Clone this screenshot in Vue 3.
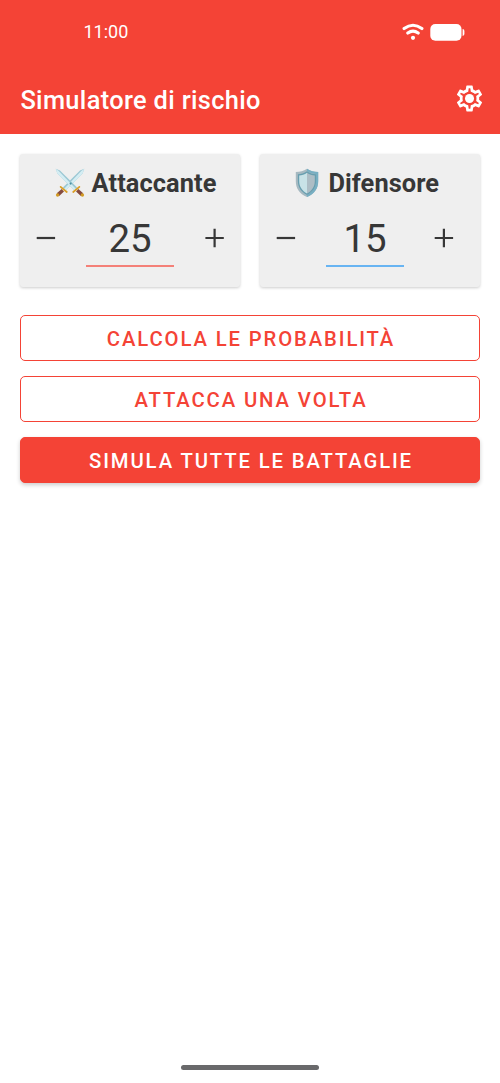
<script setup>
import { ref } from 'vue'

const attacker = ref(25)
const defender = ref(15)
</script>

<template>
  <main class="screen">
    <header>
      <div class="status">
        <time>11:00</time>
        <svg class="wifi" width="22" height="18" viewBox="0 0 22 18">
          <path d="M2.1 5.6Q11 -1.1 19.9 5.6M5.8 10Q11 6.1 16.2 10" fill="none" stroke="#fff" stroke-width="3.1" stroke-linecap="round" />
          <circle cx="11" cy="14.8" r="2.1" fill="#fff" />
        </svg>
        <svg class="battery" width="35" height="18" viewBox="0 0 35 18">
          <rect x="0.3" y="1" width="31.2" height="16.8" rx="5" fill="#fff" />
          <path d="M32.6 6.1Q34.4 6.3 34.4 7.9V11.1Q34.4 12.7 32.6 12.9Z" fill="#fff" />
        </svg>
      </div>
      <div class="toolbar">
        <h1>Simulatore di rischio</h1>
        <svg class="gear" width="31" height="31" viewBox="0 0 24 24" fill="#fff">
          <path d="M19.43 12.98c.04-.32.07-.64.07-.98s-.03-.66-.07-.98l2.11-1.65c.19-.15.24-.42.12-.64l-2-3.46c-.12-.22-.39-.3-.61-.22l-2.49 1c-.52-.4-1.08-.73-1.69-.98l-.38-2.65C14.46 2.18 14.25 2 14 2h-4c-.25 0-.46.18-.49.42l-.38 2.65c-.61.25-1.17.59-1.69.98l-2.49-1c-.23-.09-.49 0-.61.22l-2 3.46c-.13.22-.07.49.12.64l2.11 1.65c-.04.32-.07.65-.07.98s.03.66.07.98l-2.11 1.65c-.19.15-.24.42-.12.64l2 3.46c.12.22.39.3.61.22l2.49-1c.52.4 1.08.73 1.69.98l.38 2.65c.03.24.24.42.49.42h4c.25 0 .46-.18.49-.42l.38-2.65c.61-.25 1.17-.59 1.69-.98l2.49 1c.23.09.49 0 .61-.22l2-3.46c.12-.22.07-.49-.12-.64zM17.3 11.1c.14.6.14 1.2 0 1.8l-.12 1 2.1 1.65-.55.95-2.55-1.03-.9.7c-.43.32-.84.56-1.25.73l-1.03.42-.4 2.68h-1.2l-.4-2.68-1.03-.42c-.43-.18-.83-.41-1.23-.71l-.91-.72-2.56 1.03-.55-.95L6.83 13.9l-.13-1c-.12-.6-.12-1.2 0-1.8l.13-1L4.72 8.45l.55-.95 2.56 1.03.9-.7c.43-.32.84-.56 1.25-.73l1.03-.42.4-2.68h1.2l.4 2.68 1.03.42c.43.18.83.41 1.23.71l.91.72 2.56-1.03.55.95-2.11 1.65z" />
          <circle cx="12" cy="12" r="3.5" />
        </svg>
      </div>
    </header>

    <section class="cards">
      <article class="card">
        <h2>
          <svg width="30" height="30" viewBox="0 0 30 30">
            <defs>
              <g id="sword">
                <path d="M.7.8 5 2.6 22.1 19.6 19.5 22.4 2.4 5.5Z" fill="#9cc8d4" />
                <path d="M.7.8 3.5 2.8 20.8 20.8 19.5 22.4 2.4 5.5Z" fill="#d4edf3" />
                <path d="m22.2 22.2 4.8 4.4" stroke="#854b3e" stroke-width="3.5" />
                <path d="m18.2 24 6.2-5.2" stroke="#d99d24" stroke-width="1.7" stroke-linecap="round" />
                <circle cx="27.4" cy="27" r="1.7" fill="#d29a23" />
              </g>
            </defs>
            <use href="#sword" transform="translate(30 0) scale(-1 1)" />
            <use href="#sword" />
            <circle cx="15.6" cy="15.6" r="1.1" fill="#4c91a4" />
          </svg>
          <span>Attaccante</span>
        </h2>
        <div class="stepper">
          <button class="step" aria-label="Diminuisci attaccante" @click="attacker--"><svg width="20" height="20" viewBox="0 0 20 20"><path d="M.7 10H19.1" /></svg></button>
          <output class="number attack">{{ attacker }}</output>
          <button class="step" aria-label="Aumenta attaccante" @click="attacker++"><svg width="20" height="20" viewBox="0 0 20 20"><path d="M.4 10H18.8M9.6 .8V19.2" /></svg></button>
        </div>
      </article>
      <article class="card defense">
        <h2>
          <svg width="24" height="30" viewBox="0 0 24 30">
            <path d="M12 .8C8.5 3.2 5 4.1.8 4.1V13C.8 20.5 4.4 25.7 12 29C19.6 25.7 23.2 20.5 23.2 13V4.1C19 4.1 15.5 3.2 12 .8Z" fill="#a6b9c1" />
            <path d="M12 .8C15.5 3.2 19 4.1 23.2 4.1V13C23.2 20.5 19.6 25.7 12 29L11.7 27C18 23.8 21.1 19 21.1 13V6C17.8 5.7 14.8 4.9 12 3Z" fill="#77afc3" />
            <path d="M12 3.2C9.2 5.1 6.2 6 2.9 6.2V13C2.9 19.2 6 23.9 12 26.9C18 23.9 21.1 19.2 21.1 13V6.2C17.8 6 14.8 5.1 12 3.2Z" fill="#679eaf" />
            <path d="M12 4.7C9.5 6.5 6.8 7.2 4.2 7.5V13C4.2 18.7 7 22.7 12 25.5Z" fill="#c8e2e7" />
            <path d="M12 4.7C14.5 6.5 17.2 7.2 19.8 7.5V13C19.8 18.7 17 22.7 12 25.5Z" fill="#adbdc5" />
          </svg>
          <span>Difensore</span>
        </h2>
        <div class="stepper">
          <button class="step" aria-label="Diminuisci difensore" @click="defender--"><svg width="20" height="20" viewBox="0 0 20 20"><path d="M.7 10H19.1" /></svg></button>
          <output class="number defend">{{ defender }}</output>
          <button class="step" aria-label="Aumenta difensore" @click="defender++"><svg width="20" height="20" viewBox="0 0 20 20"><path d="M.7 10H19.1M9.9 .8V19.2" /></svg></button>
        </div>
      </article>
    </section>

    <section class="actions">
      <button class="action">CALCOLA LE PROBABILITÀ</button>
      <button class="action">ATTACCA UNA VOLTA</button>
      <button class="action filled">SIMULA TUTTE LE BATTAGLIE</button>
    </section>
    <div class="home-indicator"></div>
  </main>
</template>

<style>
body { margin: 0; background: #fff; }
</style>

<style scoped>
* { box-sizing: border-box; }
.screen { width: 500px; height: 1083px; display: flex; flex-direction: column; font-family: Roboto, sans-serif; color: #373737; background: #fff; overflow: hidden; }
header { height: 134px; background: #f44336; color: #fff; flex-shrink: 0; }
.status { height: 64px; display: flex; align-items: center; padding: 0 35px 0 83.5px; }
time { font-size: 18px; line-height: 24px; }
.wifi { margin-left: auto; margin-right: 6px; }
.toolbar { height: 69px; display: flex; align-items: center; justify-content: space-between; padding: 0 15px 0 20.4px; }
h1 { margin: 2px 0 0; font-size: 25.4px; line-height: 32px; font-weight: 500; letter-spacing: .34px; white-space: nowrap; }
.cards { display: grid; grid-template-columns: 220px 220px; gap: 20px; padding: 20px 20px 0; }
.card { height: 133px; background: #efefef; border-radius: 3px; box-shadow: 0 1px 3px #0003; }
h2 { height: 30px; margin: 14px 0 0; display: flex; align-items: center; justify-content: center; gap: 7px; padding-left: 11px; font-size: 25.4px; line-height: 30px; font-weight: 700; letter-spacing: .07px; }
.defense h2 { gap: 9.5px; padding: 0 6px 0 0; }
h2 svg { flex-shrink: 0; }
.stepper { display: flex; align-items: flex-start; padding: 17px 0 0 16px; }
.step { width: 20px; height: 20px; margin-top: 13px; padding: 0; border: 0; background: none; color: inherit; }
.step svg { display: block; fill: none; stroke: currentColor; stroke-width: 2.2; }
.number { height: 52px; text-align: center; font-size: 38.4px; line-height: 48px; border-bottom: 2px solid; margin: 0 31px 0 30px; }
.number { border-color: #f48078; width: 88px; }
.defend { border-color: #68b4f2; width: 78px; margin-right: 30px; }
.actions { display: grid; gap: 15px; padding: 28px 20px 0; }
.action { height: 46px; padding: 1px 0 0 2px; border: 1.5px solid #f44336; border-radius: 5px; background: #fff; color: #f44336; font: 500 20.3px/24px Roboto, sans-serif; letter-spacing: 1.88px; }
.filled { background: #f44336; color: #fff; box-shadow: 0 2px 4px #0003; }
.home-indicator { width: 138px; height: 5px; border-radius: 3px; background: #69696b; margin: auto auto 13px; }
</style>
